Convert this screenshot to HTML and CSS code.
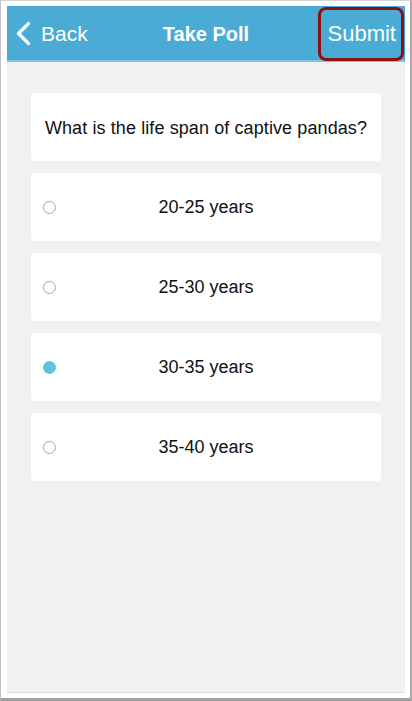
FILE: index.html
```html
<!DOCTYPE html>
<html lang="en">
<head>
<meta charset="utf-8">
<title>Take Poll</title>
<link rel="stylesheet" href="styles.css">
</head>
<body>
<div class="frame">
  <div class="screen">
    <header class="navbar">
      <div class="nav-back">
        <svg class="chev" width="17" height="25" viewBox="0 0 17 25"><path d="M13.5 2.5 L3.5 12.5 L13.5 22.5" fill="none" stroke="#fff" stroke-width="3.2" stroke-linecap="round" stroke-linejoin="round"/></svg>
        <span>Back</span>
      </div>
      <div class="nav-title">Take Poll</div>
      <div class="nav-submit">Submit</div>
      <div class="highlight"></div>
    </header>
    <main class="content">
      <div class="card question">What is the life span of captive pandas?</div>
      <div class="card option"><span class="radio"></span><span class="label">20-25 years</span></div>
      <div class="card option"><span class="radio"></span><span class="label">25-30 years</span></div>
      <div class="card option"><span class="radio checked"></span><span class="label">30-35 years</span></div>
      <div class="card option"><span class="radio"></span><span class="label">35-40 years</span></div>
    </main>
  </div>
</div>
</body>
</html>
```
FILE: styles.css
```css
* { box-sizing: border-box; }
html, body { margin: 0; padding: 0; background: #fff; }
body { font-family: "Liberation Sans", Arial, sans-serif; }

.frame {
  width: 412px;
  height: 701px;
  padding: 5px 4px 0 6px;
  border-left: 1px solid #c4c4c4;
  border-top: 1px solid #d4d4d4;
  border-right: 2px solid #a8a8a8;
  border-bottom: 3px solid #a0a0a0;
  background: #fff;
}

.screen {
  width: 398px;
  height: 687px;
  background: #f1f1f1;
  border-bottom: 1px solid #dedede;
  display: flex;
  flex-direction: column;
}

.navbar {
  position: relative;
  height: 56px;
  background: #4aabd5;
  border-bottom: 2px solid #7dc2e2;
  display: flex;
  align-items: center;
  color: #fff;
  flex-shrink: 0;
}

.nav-back {
  display: flex;
  align-items: center;
  padding-left: 8px;
  font-size: 21px;
  width: 120px;
  padding-top: 1px;
}
.nav-back .chev { margin-right: 9px; }

.nav-title {
  flex: 1;
  text-align: center;
  font-weight: bold;
  font-size: 20px;
  padding-top: 2px;
  margin-left: -10px;
}

.nav-submit {
  width: 110px;
  text-align: right;
  padding-right: 9px;
  font-size: 22px;
  padding-top: 1px;
}

.highlight {
  position: absolute;
  left: 311px;
  top: 1px;
  width: 86px;
  height: 54px;
  border: 3px solid #8e0f12;
  border-radius: 8px;
}

.content {
  padding: 31px 24px 0 24px;
  display: flex;
  flex-direction: column;
  gap: 12px;
}

.card {
  background: #fff;
  height: 68px;
  border-radius: 3px;
  display: flex;
  align-items: center;
  color: #111;
  font-size: 18px;
}

.question {
  justify-content: center;
  padding-top: 2px;
  letter-spacing: 0.1px;
}

.option {
  position: relative;
  justify-content: center;
}
.option .label { padding-top: 1px; }

.radio {
  position: absolute;
  left: 12px;
  top: 28px;
  width: 13px;
  height: 13px;
  border-radius: 50%;
  border: 1px solid #a6a6a6;
  background: #fff;
}
.radio.checked {
  border-color: #5bc7d6;
  background: #5bc7d6;
}
```
